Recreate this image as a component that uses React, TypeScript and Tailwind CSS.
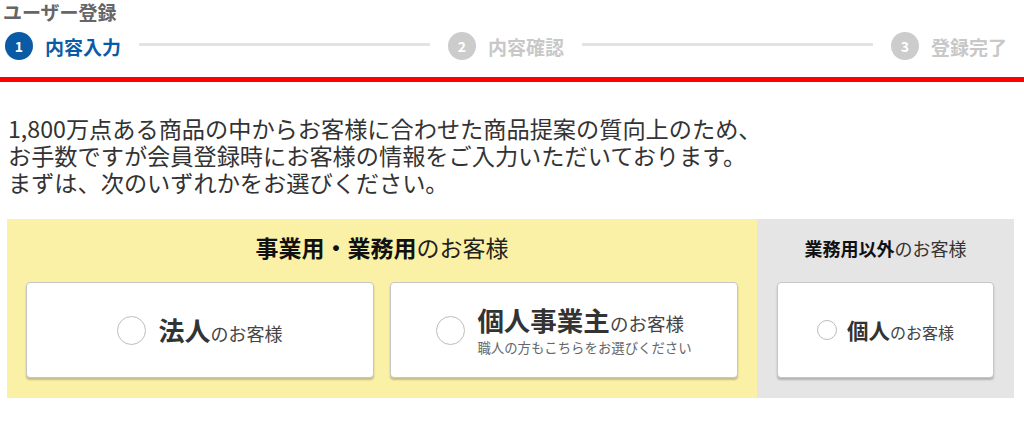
import { type FC } from 'react';

const FONT = "font-['Noto_Sans_CJK_JP','Noto_Sans',sans-serif]";

interface StepProps {
  num: number;
  label: string;
  active?: boolean;
}

const Step: FC<StepProps> = ({ num, label, active }) => (
  <div className="flex items-center shrink-0">
    <span
      className={`flex h-[28px] w-[28px] items-center justify-center rounded-full text-[14px] font-bold text-white ${
        active ? 'bg-[#0a5ba6]' : 'bg-[#cccccc]'
      }`}
    >
      {num}
    </span>
    <span
      className={`ml-[12px] text-[19px] font-bold leading-none ${active ? 'text-[#0a5ba6]' : 'text-[#c8c8c8]'}`}
    >
      {label}
    </span>
  </div>
);

const StepLine: FC = () => <div className="mx-[18px] mb-[3px] h-[3px] flex-1 bg-[#e3e3e3]" />;

const Radio: FC<{ size: string }> = ({ size }) => (
  <span className={`${size} shrink-0 rounded-full border-[1.5px] border-[#bdbdbd] bg-white`} />
);

const Card: FC<{ children: React.ReactNode }> = ({ children }) => (
  <button
    type="button"
    className="flex h-[96px] flex-1 items-center justify-center rounded-[4px] border border-[#c6c6c6] bg-white shadow-[0_2px_2px_rgba(0,0,0,0.22)]"
  >
    {children}
  </button>
);

export default function App() {
  return (
    <div className={`w-[1024px] bg-white text-[#333] ${FONT}`}>
      <h1 className="pl-[3px] text-[19px] font-bold leading-[24px] text-[#666]">ユーザー登録</h1>

      <div className="flex items-center pl-[5px] pr-[17px] pt-[8px]">
        <Step num={1} label="内容入力" active />
        <StepLine />
        <Step num={2} label="内容確認" />
        <StepLine />
        <Step num={3} label="登録完了" />
      </div>

      <div className="mt-[17px] h-[5px] bg-[#ff0000]" />

      <p className="pl-[8px] pt-[33px] text-[23.2px] leading-[27px] text-[#333]">
        1,800万点ある商品の中からお客様に合わせた商品提案の質向上のため、
        <br />
        お手数ですが会員登録時にお客様の情報をご入力いただいております。
        <br />
        まずは、次のいずれかをお選びください。
      </p>

      <div className="ml-[7px] mr-[10px] mt-[23px] flex h-[179px]">
        <section className="flex w-[750px] flex-col bg-[#fbf1a6] px-[19px] pt-[14px]">
          <h2 className="text-center text-[23px] leading-[28px] text-[#222]">
            <span className="font-bold text-[#111]">事業用・業務用</span>のお客様
          </h2>
          <div className="mt-[21px] flex gap-[16px]">
            <Card>
              <Radio size="h-[29px] w-[29px]" />
              <span className="ml-[12px] flex items-baseline">
                <span className="text-[26px] font-bold leading-[32px] text-[#333]">法人</span>
                <span className="text-[18px] text-[#444]">のお客様</span>
              </span>
            </Card>
            <Card>
              <Radio size="h-[29px] w-[29px]" />
              <span className="ml-[12px] flex flex-col items-start">
                <span className="flex items-baseline">
                  <span className="text-[26.5px] font-bold leading-[32px] text-[#333]">個人事業主</span>
                  <span className="text-[18.5px] text-[#444]">のお客様</span>
                </span>
                <span className="mt-[1px] text-[13.4px] leading-[18px] text-[#666]">
                  職人の方もこちらをお選びください
                </span>
              </span>
            </Card>
          </div>
        </section>

        <section className="flex flex-1 flex-col bg-[#e5e5e5] px-[20px] pt-[16px]">
          <h2 className="text-center text-[18px] leading-[26px] text-[#333]">
            <span className="font-bold text-[#111]">業務用以外</span>のお客様
          </h2>
          <div className="mt-[21px] flex">
            <Card>
              <Radio size="h-[20px] w-[20px]" />
              <span className="ml-[10px] flex items-baseline">
                <span className="text-[21.5px] font-bold leading-[28px] text-[#333]">個人</span>
                <span className="text-[16px] text-[#444]">のお客様</span>
              </span>
            </Card>
          </div>
        </section>
      </div>

      <p className="pl-[55px] pt-[20px] text-[16px] leading-[22px]">
        <span className="text-[#2a5db0]">法人・個人事業主のお客様</span>
        <span className="text-[#333]">は、会員登録後に</span>
        <span className="text-[#e60012]">審査</span>
        <span className="text-[#333]">がございます。</span>
      </p>
    </div>
  );
}
